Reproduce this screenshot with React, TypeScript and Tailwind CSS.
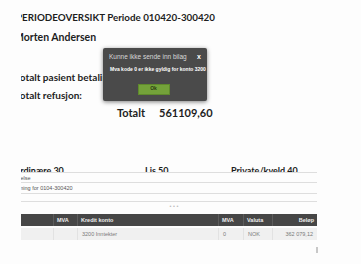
export default function App() {
  const cols = [
    { label: '', w: 'w-[32px]', value: '', align: 'text-left' },
    { label: 'MVA', w: 'w-[24px]', value: '', align: 'text-left' },
    { label: 'Kredit konto', w: 'w-[141px]', value: '3200 Inntekter', align: 'text-left' },
    { label: 'MVA', w: 'w-[25px]', value: '0', align: 'text-left' },
    { label: 'Valuta', w: 'w-[29px]', value: 'NOK', align: 'text-left' },
    { label: 'Beløp', w: 'w-[45px]', value: '362 079,12', align: 'text-right' },
  ];

  return (
    <div className="relative w-[361px] h-[264px] bg-[#fdfdfd] overflow-hidden">
      <div className="ml-[21px] w-[296px] overflow-hidden font-['Lato',sans-serif] text-[#1e1e1e]">
        <div className="mt-[10px] h-[14px] leading-[14px] text-[9.8px] font-bold whitespace-nowrap -ml-[5px]">
          PERIODEOVERSIKT Periode 010420-300420
        </div>
        <div className="mt-[6px] h-[14px] leading-[14px] text-[10.5px] font-bold whitespace-nowrap -ml-[7px]">
          Morten Andersen
        </div>
        <div className="mt-[26px] h-[14px] leading-[14px] text-[10px] font-bold whitespace-nowrap -ml-[6px]">
          Totalt pasient betaling:
        </div>
        <div className="mt-[4px] h-[14px] leading-[14px] text-[10px] font-bold whitespace-nowrap -ml-[6px]">
          Totalt refusjon:
        </div>
        <div className="mt-[3px] h-[16px] leading-[16px] text-[11px] font-bold whitespace-nowrap pl-[96px] flex gap-[14px]">
          <span>Totalt</span>
          <span>561109,60</span>
        </div>
        <div className="mt-[40px] h-[11px] overflow-hidden flex text-[9px] leading-[19px] font-bold whitespace-nowrap">
          <span className="w-[132px] -ml-[8px]">Ordinære 30</span>
          <span className="w-[86px]">Lis 50</span>
          <span>Private/kveld 40</span>
        </div>

        <div className="font-['Liberation_Sans',sans-serif] text-[5.5px] text-[#555]">
          <div className="border-t border-[#dedede] h-[10px] leading-[10px] -ml-[22px] whitespace-nowrap">Godtgjørelse</div>
          <div className="border-t border-[#dedede] h-[11px] leading-[11px] -ml-[15px] whitespace-nowrap">Avregning for 0104-300420</div>
          <div className="border-t border-[#dedede] h-[8px]"></div>
          <div className="border-t border-[#dedede] h-[8px] leading-[8px] text-center text-[#bbb] pl-[10px]">• • •</div>
        </div>

        <div className="mt-[5px] font-['Liberation_Sans',sans-serif] text-[5.5px]">
          <div className="flex h-[12px] bg-[#464646] text-[#eee] font-bold leading-[12px]">
            {cols.map((c, i) => (
              <div key={i} className={`${c.w} ${c.align} px-[3px] border-l border-[#5c5c5c] first:border-l-0`}>
                {c.label}
              </div>
            ))}
          </div>
          <div className="flex h-[12px] mt-[2px] bg-[#f0f0f0] text-[#7a7a7a] leading-[12px]">
            {cols.map((c, i) => (
              <div key={i} className={`${c.w} ${c.align} px-[4px] border-l border-[#e2e2e2] first:border-l-0`}>
                {c.value}
              </div>
            ))}
          </div>
        </div>
      </div>

      <div className="absolute left-[316px] top-[247px] w-[2px] h-[6px] bg-[#c8c8c8]"></div>

      <div className="absolute left-[103px] top-[48px] w-[104px] h-[53px] bg-[#4a4a4a] rounded-[2px] shadow-[0_1px_4px_rgba(0,0,0,0.5)] font-['Liberation_Sans',sans-serif]">
        <div className="flex items-center justify-between pl-[6px] pr-[6px] pt-[4px] h-[14px]">
          <span className="text-[6.5px] text-[#d8d8d8]">Kunne ikke sende inn bilag</span>
          <span className="text-[7px] font-bold text-white">x</span>
        </div>
        <div className="pl-[7px] mt-[4px] text-[5px] font-bold text-white whitespace-nowrap">
          Mva kode 0 er ikke gyldig for konto 3200
        </div>
        <div className="flex justify-center mt-[10px] pr-[3px]">
          <div className="w-[32px] h-[11px] bg-[#74a23a] border border-[#5f8a2c] text-[5px] font-bold text-[#2a3a12] flex items-center justify-center">
            Ok
          </div>
        </div>
      </div>
    </div>
  );
}
